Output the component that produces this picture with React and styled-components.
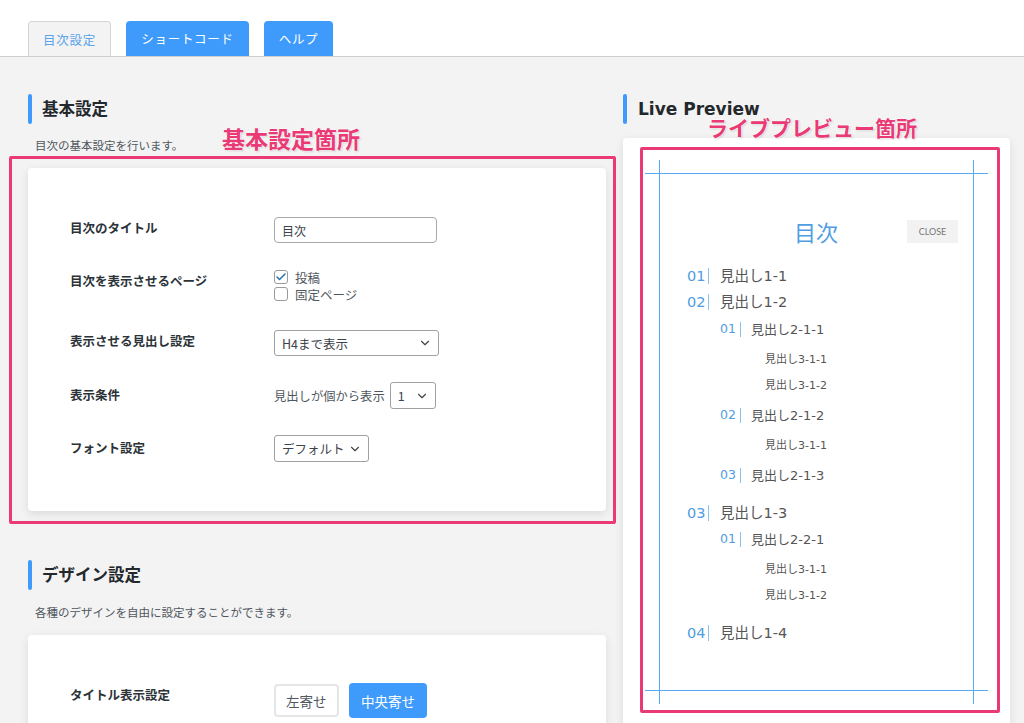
import React from "react";
import styled, { createGlobalStyle } from "styled-components";
import { Check, ChevronDown } from "lucide-react";

const GlobalStyle = createGlobalStyle`
  html, body {
    margin: 0;
    height: 723px;
    overflow: hidden;
    background: #f3f3f3;
  }
  body {
    font-family: "DejaVu Sans", "Noto Sans CJK JP", sans-serif;
    color: #3c434a;
  }
  * { box-sizing: border-box; }
`;

const cjk = `"Noto Sans CJK JP", sans-serif`;
const blue = "#3f9bfb";
const pink = "#ea3a76";

const Page = styled.div`
  position: relative;
  width: 1024px;
  height: 723px;
  overflow: hidden;
`;

const TabBar = styled.nav`
  display: flex;
  align-items: flex-end;
  gap: 15px;
  height: 57px;
  padding: 21px 0 0 28px;
  background: #fff;
  border-bottom: 1px solid #cfcfcf;
`;

const Tab = styled.div`
  width: ${({ $width }) => $width}px;
  height: 35px;
  display: flex;
  align-items: center;
  justify-content: center;
  font: 400 12.5px ${cjk};
  letter-spacing: 0.7px;
  border-radius: 4px 4px 0 0;
  color: ${({ $active }) => ($active ? "#5aa4ea" : "#fff")};
  background: ${({ $active }) => ($active ? "#f3f3f3" : blue)};
  border: ${({ $active }) => ($active ? "1px solid #d5d5d5" : "none")};
  border-bottom: none;
`;

const Columns = styled.main`
  display: grid;
  grid-template-columns: 578px 387px;
  column-gap: 17px;
  padding: 37px 0 0 28px;
`;

const Section = styled.section`
  margin-top: ${({ $gap }) => $gap || 0}px;
`;

const Heading = styled.h2`
  position: relative;
  margin: 0;
  height: 30px;
  padding: 0 0 ${({ $latin }) => ($latin ? 1 : 3)}px ${({ $latin }) => ($latin ? 15 : 14)}px;
  display: flex;
  align-items: center;
  font: 700 ${({ $latin }) => ($latin ? `17px "DejaVu Sans", sans-serif` : `16.5px ${cjk}`)};
  color: #23282d;

  &::before {
    content: "";
    position: absolute;
    left: 0;
    top: 0;
    width: 4px;
    height: 30px;
    border-radius: 2px;
    background: ${blue};
  }
`;

const Desc = styled.p`
  margin: ${({ $top }) => $top || 13}px 0 15px;
  padding-left: 7px;
  font: 400 11.5px/16px ${cjk};
  color: #50575e;
`;

const Card = styled.div`
  background: #fff;
  border-radius: 4px;
  box-shadow: 0 3px 10px rgba(0, 0, 0, 0.1);
`;

const FormCard = styled(Card)`
  display: flex;
  flex-direction: column;
  gap: 26px;
  padding: ${({ $top }) => $top || 49}px 42px 49px;
`;

const Row = styled.div`
  display: flex;
  align-items: flex-start;
`;

const Label = styled.div`
  width: 204px;
  flex: none;
  padding-top: ${({ $offset }) => $offset || 3}px;
  font: 700 12.5px/16px ${cjk};
  color: #2c3338;
`;

const TextInput = styled.input`
  width: 163px;
  height: 26px;
  padding: 0 7px;
  border: 1px solid #a8a8a8;
  border-radius: 4px;
  font: 400 12px ${cjk};
  color: #3c434a;
  background: #fff;
`;

const Checks = styled.div`
  display: flex;
  flex-direction: column;
  gap: 1px;
  padding-bottom: 2px;
`;

const CheckRow = styled.div`
  display: flex;
  align-items: center;
  gap: 7px;
  height: 16px;
  font: 400 12.5px ${cjk};
  color: #50575e;
`;

const Box = styled.span`
  width: 14px;
  height: 14px;
  display: flex;
  align-items: center;
  justify-content: center;
  border: 1px solid #9a9a9a;
  border-radius: 3px;
  background: #fff;
  color: #2271b1;
`;

const SelectBox = styled.div`
  width: ${({ $width }) => $width}px;
  height: ${({ $height }) => $height || 27}px;
  padding: 0 6px 0 7px;
  display: flex;
  align-items: center;
  justify-content: space-between;
  border: 1px solid #a0a0a0;
  border-radius: 3px;
  background: #fff;
  font: 400 12.5px ${cjk};
  color: #3c434a;
`;

const InlineField = styled.div`
  display: flex;
  align-items: center;
  gap: 5px;
  font: 400 12.3px ${cjk};
  color: #50575e;
`;

const ButtonGroup = styled.div`
  display: flex;
  align-items: center;
  gap: 10.5px;
`;

const Choice = styled.div`
  height: ${({ $active }) => ($active ? 35 : 33)}px;
  padding: 0 ${({ $active }) => ($active ? 12 : 10)}px;
  display: flex;
  align-items: center;
  border-radius: 4px;
  font: 400 13.5px ${cjk};
  color: ${({ $active }) => ($active ? "#fff" : "#50575e")};
  background: ${({ $active }) => ($active ? blue : "#fff")};
  border: ${({ $active }) => ($active ? "none" : "2px solid #e6e6e6")};
`;

const PreviewCard = styled(Card)`
  position: relative;
  margin-top: 14px;
  height: 640px;
  padding: 35px 37px 0 36px;
`;

const Frame = styled.div`
  position: relative;
  height: 517px;
  padding-top: 46px;
`;

const GuideV = styled.span`
  position: absolute;
  top: -13px;
  bottom: -14px;
  left: ${({ $right }) => ($right ? "100%" : "0")};
  width: 1px;
  background: #55a8f2;
`;

const GuideH = styled.span`
  position: absolute;
  left: -14px;
  right: -15px;
  top: ${({ $bottom }) => ($bottom ? "100%" : "0")};
  height: 1px;
  background: #55a8f2;
`;

const TocHead = styled.div`
  display: grid;
  grid-template-columns: 1fr auto 1fr;
  align-items: center;
  padding: 0 15px;
  height: 24px;
`;

const TocTitle = styled.div`
  grid-column: 2;
  font: 400 22px/24px ${cjk};
  color: #4f9de2;
`;

const Close = styled.div`
  justify-self: end;
  width: 51px;
  height: 23px;
  display: flex;
  align-items: center;
  justify-content: center;
  background: #f2f2f2;
  font: 400 9px "Lato", sans-serif;
  color: #777;
`;

const TocList = styled.ol`
  list-style: none;
  margin: 20px 0 0;
  padding: 0 0 0 28px;
`;

const Item = styled.li`
  margin-top: ${({ $gap }) => $gap || 0}px;
`;

const Entry = styled.div`
  display: flex;
  align-items: center;
  height: 26px;
  line-height: 1;
  font-size: ${({ $level }) => ($level === 1 ? 14.5 : 13)}px;
  color: #555;
`;

const Num = styled.span`
  width: ${({ $level }) => ($level === 1 ? 22 : 21)}px;
  flex: none;
  height: ${({ $level }) => ($level === 1 ? 16 : 15)}px;
  display: flex;
  align-items: center;
  border-right: 1px solid #8cc2f0;
  margin-right: ${({ $level }) => ($level === 1 ? 11 : 10)}px;
  font-size: ${({ $level }) => ($level === 1 ? 14.5 : 12.5)}px;
  color: #4f9de2;
`;

const SubList = styled.ol`
  list-style: none;
  margin: ${({ $top }) => $top || 0}px 0 0;
  padding: 0 0 0 ${({ $indent }) => $indent}px;
`;

const SmallList = styled(SubList)`
  margin-top: 4px;
`;

const SmallEntry = styled.li`
  height: 26px;
  display: flex;
  align-items: center;
  line-height: 1;
  font-size: 11px;
  color: #555;
`;

const OutlineBox = styled.div`
  position: absolute;
  left: ${({ $x }) => $x}px;
  top: ${({ $y }) => $y}px;
  width: ${({ $w }) => $w}px;
  height: ${({ $h }) => $h}px;
  border: 3px solid ${pink};
  border-radius: 2px;
  pointer-events: none;
`;

const Callout = styled.div`
  position: absolute;
  left: ${({ $x }) => $x}px;
  top: ${({ $y }) => $y}px;
  font: 700 ${({ $size }) => $size}px/1 ${cjk};
  color: ${pink};
  white-space: nowrap;
  text-shadow: 0 0 2px #fff, 0 0 2px #fff, 1px 1px 2px rgba(0, 0, 0, 0.2);
`;

const Select = ({ width, height, children }) => (
  <SelectBox $width={width} $height={height}>
    <span>{children}</span>
    <ChevronDown size={14} strokeWidth={2} color="#444" />
  </SelectBox>
);

const toc = [
  { n: "01", text: "見出し1-1" },
  {
    n: "02",
    text: "見出し1-2",
    subTop: 1,
    sub: [
      { n: "01", text: "見出し2-1-1", small: ["見出し3-1-1", "見出し3-1-2"] },
      { n: "02", text: "見出し2-1-2", small: ["見出し3-1-1"] },
      { n: "03", text: "見出し2-1-3" },
    ],
  },
  {
    n: "03",
    text: "見出し1-3",
    gap: 12,
    sub: [{ n: "01", text: "見出し2-2-1", small: ["見出し3-1-1", "見出し3-1-2"] }],
  },
  { n: "04", text: "見出し1-4", gap: 12 },
];

export default function App() {
  return (
    <Page>
      <GlobalStyle />
      <TabBar>
        <Tab $active $width={83}>目次設定</Tab>
        <Tab $width={123}>ショートコード</Tab>
        <Tab $width={69}>ヘルプ</Tab>
      </TabBar>

      <Columns>
        <div>
          <Section>
            <Heading>基本設定</Heading>
            <Desc>目次の基本設定を行います。</Desc>
            <FormCard>
              <Row>
                <Label>目次のタイトル</Label>
                <TextInput value="目次" readOnly />
              </Row>
              <Row>
                <Label $offset={4}>目次を表示させるページ</Label>
                <Checks>
                  <CheckRow>
                    <Box><Check size={12} strokeWidth={3} /></Box>
                    投稿
                  </CheckRow>
                  <CheckRow>
                    <Box />
                    固定ページ
                  </CheckRow>
                </Checks>
              </Row>
              <Row>
                <Label>表示させる見出し設定</Label>
                <Select width={165} height={26}>H4まで表示</Select>
              </Row>
              <Row>
                <Label $offset={5}>表示条件</Label>
                <InlineField>
                  見出しが個から表示
                  <Select width={46}>1</Select>
                </InlineField>
              </Row>
              <Row>
                <Label $offset={5}>フォント設定</Label>
                <Select width={95}>デフォルト</Select>
              </Row>
            </FormCard>
          </Section>

          <Section $gap={49}>
            <Heading>デザイン設定</Heading>
            <Desc $top={14}>各種のデザインを自由に設定することができます。</Desc>
            <FormCard $top={48}>
              <Row>
                <Label $offset={4}>タイトル表示設定</Label>
                <ButtonGroup>
                  <Choice>左寄せ</Choice>
                  <Choice $active>中央寄せ</Choice>
                </ButtonGroup>
              </Row>
            </FormCard>
          </Section>
        </div>

        <Section>
          <Heading $latin>Live Preview</Heading>
          <PreviewCard>
            <Frame>
              <GuideV />
              <GuideV $right />
              <GuideH />
              <GuideH $bottom />
              <TocHead>
                <TocTitle>目次</TocTitle>
                <Close>CLOSE</Close>
              </TocHead>
              <TocList>
                {toc.map((item, i) => (
                  <Item key={i} $gap={item.gap}>
                    <Entry $level={1}>
                      <Num $level={1}>{item.n}</Num>
                      {item.text}
                    </Entry>
                    {item.sub && (
                      <SubList $indent={33} $top={item.subTop}>
                        {item.sub.map((sub, j) => (
                          <Item key={j} $gap={j > 0 ? 4 : 0}>
                            <Entry $level={2}>
                              <Num $level={2}>{sub.n}</Num>
                              {sub.text}
                            </Entry>
                            {sub.small && (
                              <SmallList $indent={45}>
                                {sub.small.map((text, k) => (
                                  <SmallEntry key={k}>{text}</SmallEntry>
                                ))}
                              </SmallList>
                            )}
                          </Item>
                        ))}
                      </SubList>
                    )}
                  </Item>
                ))}
              </TocList>
            </Frame>
          </PreviewCard>
        </Section>
      </Columns>

      <OutlineBox $x={9} $y={156} $w={607} $h={368} />
      <OutlineBox $x={640} $y={147} $w={360} $h={566} />
      <Callout $x={222} $y={127} $size={23}>基本設定箇所</Callout>
      <Callout $x={707} $y={117} $size={21}>ライブプレビュー箇所</Callout>
    </Page>
  );
}
